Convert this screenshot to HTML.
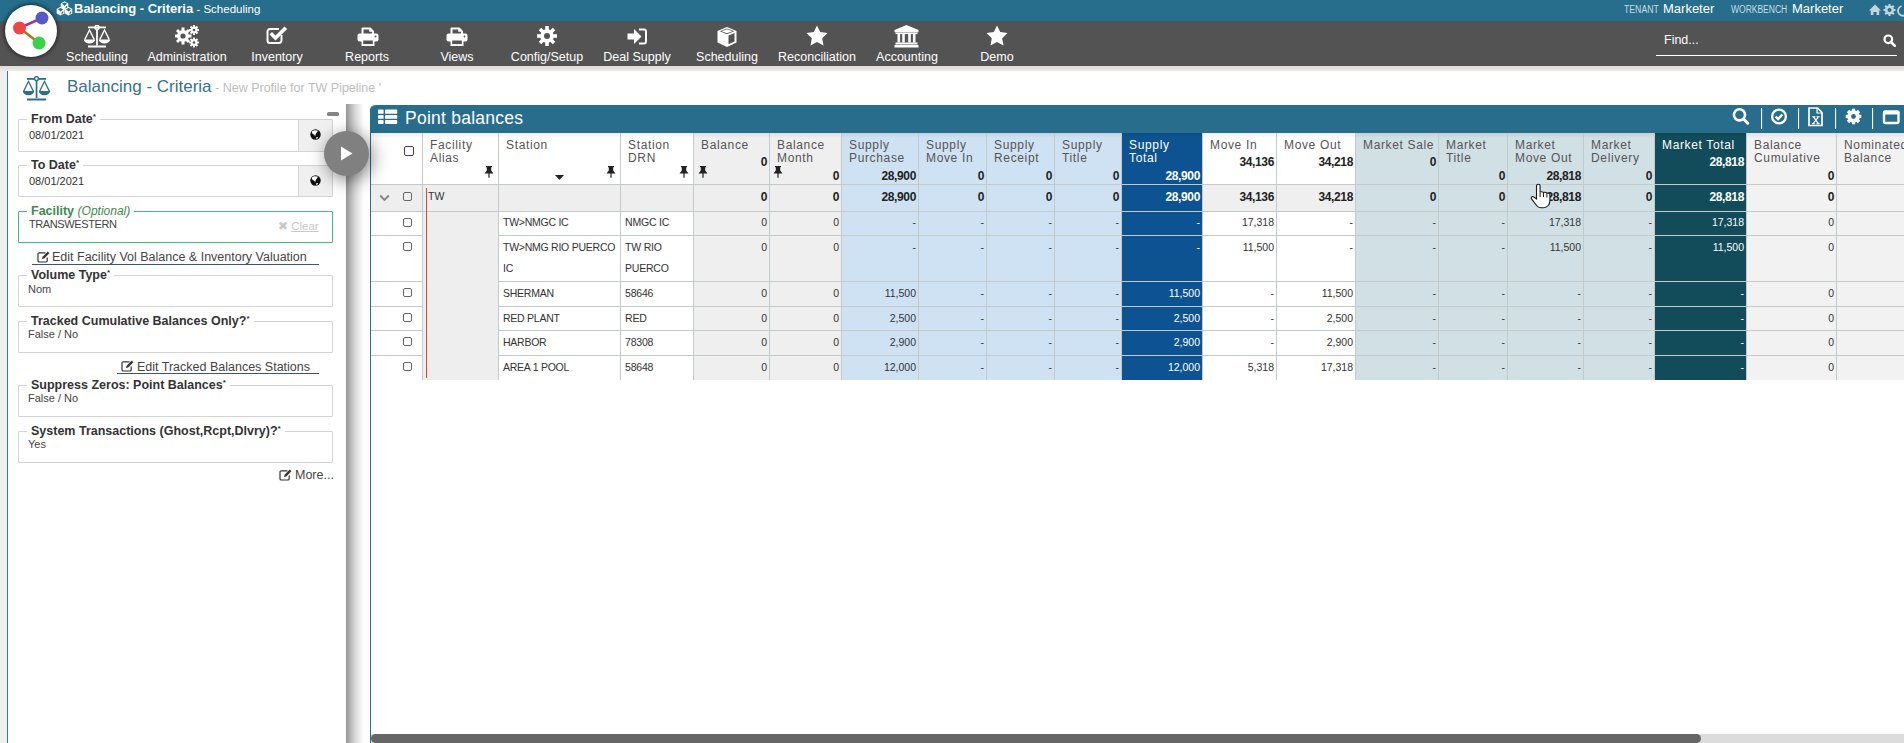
<!DOCTYPE html>
<html><head><meta charset="utf-8">
<style>
*{box-sizing:border-box;margin:0;padding:0}
html,body{width:1904px;height:743px;overflow:hidden;background:#fff;font-family:"Liberation Sans",sans-serif}
.abs{position:absolute}
#topbar{left:0;top:0;width:1904px;height:21px;background:#266e8c}
#nav{left:0;top:21px;width:1904px;height:45px;background:#535353}
#strip{left:0;top:66px;width:1904px;height:5px;background:linear-gradient(#dcdbd9,#ecebe9)}
#lstrip{left:0;top:71px;width:7px;height:672px;background:#f0efed}
#lline{left:7px;top:71px;width:1px;height:672px;background:#2b7bb0}
.navi{position:absolute;top:21px;width:90px;height:45px;text-align:center;color:#fff}
.navi .lb{position:absolute;left:0;width:90px;top:28px;font-size:12.5px;line-height:14px;white-space:nowrap}
.navi svg{position:absolute;left:35px;top:5px}
.t{position:absolute;white-space:nowrap}
</style></head><body>
<div id="topbar" class="abs"></div>
<div id="nav" class="abs"></div>
<div id="strip" class="abs"></div>
<div id="lstrip" class="abs"></div>
<div id="lline" class="abs"></div>

<!-- top bar text -->
<svg class="abs" style="left:56px;top:1px" width="17" height="15" viewBox="0 0 17 15"><path d="M8.50 0.20L12.31 2.40V6.80L8.50 9.00L4.69 6.80V2.40z" fill="#fff"/><path d="M8.50 1.50L11.01 2.60L8.50 4.90L5.99 2.60z" fill="#266e8c"/><path d="M9.50 5.80L11.21 4.40V6.50L9.50 7.90z" fill="#266e8c"/><path d="M4.50 5.80L8.31 8.00V12.40L4.50 14.60L0.69 12.40V8.00z" fill="#fff"/><path d="M4.50 7.10L7.01 8.20L4.50 10.50L1.99 8.20z" fill="#266e8c"/><path d="M5.50 11.40L7.21 10.00V12.10L5.50 13.50z" fill="#266e8c"/><path d="M12.50 5.80L16.31 8.00V12.40L12.50 14.60L8.69 12.40V8.00z" fill="#fff"/><path d="M12.50 7.10L15.01 8.20L12.50 10.50L9.99 8.20z" fill="#266e8c"/><path d="M13.50 11.40L15.21 10.00V12.10L13.50 13.50z" fill="#266e8c"/></svg>
<div class="t" style="left:74px;top:1px;font-size:13px;line-height:16px;color:#fff"><b>Balancing - Criteria</b><span style="font-size:11.5px"> - Scheduling</span></div>
<div class="t" style="left:1624px;top:1px;font-size:13px;line-height:16px;color:#fff"><span style="display:inline-block;font-size:10px;transform:scaleX(.87);transform-origin:0 0;color:#c9dbe3">TENANT</span></div>
<div class="t" style="left:1663px;top:1px;font-size:13px;line-height:16px;color:#fff">Marketer</div>
<div class="t" style="left:1731px;top:1px;font-size:13px;line-height:16px;color:#fff"><span style="display:inline-block;font-size:10px;transform:scaleX(.85);transform-origin:0 0;color:#c9dbe3">WORKBENCH</span></div>
<div class="t" style="left:1792px;top:1px;font-size:13px;line-height:16px;color:#fff">Marketer</div>
<svg class="abs" style="left:1868px;top:2px" width="36" height="16" viewBox="0 0 36 16">
 <path d="M1 8.5L7 2.5l6 6h-1.8V13H8.6V10H5.4v3H2.8V8.5z" fill="#c3d3db"/>
 <g transform="translate(21.5,8)"><circle r="4.6" fill="#c3d3db"/><g stroke="#c3d3db" stroke-width="2"><line y1="-6" y2="6"/><line x1="-6" x2="6"/><line x1="-4.3" y1="-4.3" x2="4.3" y2="4.3"/><line x1="4.3" y1="-4.3" x2="-4.3" y2="4.3"/></g><circle r="2" fill="#266e8c"/></g>
 <path d="M33.5 4a5 5 0 1 0 3 0" fill="none" stroke="#c3d3db" stroke-width="1.8"/>
</svg>
<!-- logo -->
<div class="abs" style="left:5px;top:5px;width:52px;height:52px;border-radius:50%;background:#fff;box-shadow:0 0 4px 1px rgba(0,0,0,.6)"></div>
<svg class="abs" style="left:5px;top:5px" width="52" height="52" viewBox="0 0 52 52">
 <line x1="14.5" y1="23" x2="37" y2="13" stroke="#9a3a9a" stroke-width="2.5"/>
 <line x1="14.5" y1="23" x2="34" y2="38" stroke="#b0702a" stroke-width="2.5"/>
 <circle cx="37" cy="13" r="6.5" fill="#5657c8"/>
 <circle cx="14.5" cy="23" r="6.5" fill="#ef4646"/>
 <circle cx="34" cy="38" r="6.5" fill="#3ad24a"/>
</svg>
<svg class="abs" style="left:83px;top:25px" width="28" height="23" viewBox="0 0 28 23"><g fill="#fff">
<rect x="5" y="1.5" width="18" height="1.8"/><circle cx="14" cy="2.4" r="2" fill="none" stroke="#fff" stroke-width="1.5"/>
<rect x="13.1" y="3.5" width="1.8" height="17"/><rect x="5" y="20.5" width="18" height="2"/>
<path d="M6.5 3.5L1 14.5h1.6L6.5 6.5l3.9 8h1.6z"/><path d="M0.8 14.5h11.4a5.7 4 0 0 1-11.4 0z"/>
<path d="M21.5 3.5L16 14.5h1.6l3.9-8 3.9 8H27z"/><path d="M15.8 14.5h11.4a5.7 4 0 0 1-11.4 0z"/></g></svg><svg class="abs" style="left:175px;top:25px" width="25" height="23" viewBox="0 0 25 23">
<g fill="#fff"><circle cx="8" cy="11" r="6"/>
<g stroke="#fff" stroke-width="3"><line x1="8" y1="2.5" x2="8" y2="19.5"/><line x1="-0.5" y1="11" x2="16.5" y2="11"/><line x1="2" y1="5" x2="14" y2="17"/><line x1="14" y1="5" x2="2" y2="17"/></g>
<circle cx="19" cy="5" r="3.5"/><g stroke="#fff" stroke-width="1.8"><line x1="19" y1="0" x2="19" y2="10"/><line x1="14" y1="5" x2="24" y2="5"/><line x1="15.5" y1="1.5" x2="22.5" y2="8.5"/><line x1="22.5" y1="1.5" x2="15.5" y2="8.5"/></g>
<circle cx="19" cy="17.5" r="3.5"/><g stroke="#fff" stroke-width="1.8"><line x1="19" y1="12.5" x2="19" y2="22.5"/><line x1="14" y1="17.5" x2="24" y2="17.5"/><line x1="15.5" y1="14" x2="22.5" y2="21"/><line x1="22.5" y1="14" x2="15.5" y2="21"/></g></g>
<circle cx="8" cy="11" r="2.6" fill="#535353"/><circle cx="19" cy="5" r="1.3" fill="#535353"/><circle cx="19" cy="17.5" r="1.3" fill="#535353"/></svg><svg class="abs" style="left:266px;top:26px" width="23" height="19" viewBox="0 0 23 19">
<path d="M15.5 9v5.5a2.5 2.5 0 0 1-2.5 2.5H4a2.5 2.5 0 0 1-2.5-2.5V5.5A2.5 2.5 0 0 1 4 3h9" fill="none" stroke="#fff" stroke-width="2"/>
<path d="M3.5 8.5l2.5-2.5 3.5 3.5L18.5 0.5l2.7 2.5L9.5 14.5z" fill="#fff"/></svg><svg class="abs" style="left:357px;top:27px" width="22" height="19" viewBox="0 0 22 19"><g fill="#fff">
<path d="M4.5 7V1.5a1 1 0 0 1 1-1h8l3.5 3.5V7h-2V4.8h-2.8V2.5H6.5V7z"/><rect x="0.5" y="6.5" width="21" height="8" rx="2"/><path d="M4.5 11.5h13V19h-13z"/></g>
<rect x="6.5" y="2" width="7" height="4" fill="#535353" opacity="0"/><rect x="6.2" y="13.5" width="9.6" height="3.6" fill="#535353"/><circle cx="18.5" cy="9.5" r="0.9" fill="#535353"/></svg><svg class="abs" style="left:446px;top:27px" width="22" height="19" viewBox="0 0 22 19"><g fill="#fff">
<path d="M4.5 7V1.5a1 1 0 0 1 1-1h8l3.5 3.5V7h-2V4.8h-2.8V2.5H6.5V7z"/><rect x="0.5" y="6.5" width="21" height="8" rx="2"/><path d="M4.5 11.5h13V19h-13z"/></g>
<rect x="6.5" y="2" width="7" height="4" fill="#535353" opacity="0"/><rect x="6.2" y="13.5" width="9.6" height="3.6" fill="#535353"/><circle cx="18.5" cy="9.5" r="0.9" fill="#535353"/></svg><svg class="abs" style="left:537px;top:26px" width="20" height="20" viewBox="0 0 20 20"><g fill="#fff"><circle cx="10" cy="10" r="6.8"/>
<g stroke="#fff" stroke-width="3.6"><line x1="10" y1="0" x2="10" y2="20"/><line x1="0" y1="10" x2="20" y2="10"/><line x1="3" y1="3" x2="17" y2="17"/><line x1="17" y1="3" x2="3" y2="17"/></g></g>
<circle cx="10" cy="10" r="3" fill="#535353"/></svg><svg class="abs" style="left:627px;top:28px" width="21" height="17" viewBox="0 0 21 17"><g fill="#fff">
<path d="M0.5 5.5h6.5V1l7.5 7.5L7 16v-4.5H0.5z"/><path d="M12 0.5h5a3 3 0 0 1 3 3v10a3 3 0 0 1-3 3h-5v-2h5a1 1 0 0 0 1-1v-10a1 1 0 0 0-1-1h-5z"/></g></svg><svg class="abs" style="left:716px;top:26px" width="22" height="22" viewBox="0 0 22 22">
<path d="M11 1L20.5 5v11.5L11 21 1.5 16.5V5z" fill="#fff"/><path d="M4 6.5l7 3v9l-7-3.2z" fill="#fff"/><path d="M12.5 9.5l6-2.6v8.6l-6 2.8z" fill="#535353"/><path d="M3.8 5.3L11 2.5l7.2 2.8L11 8.2z" fill="#535353"/><path d="M5.5 5.3L11 3.3l5.5 2L11 7.3z" fill="#fff"/></svg><svg class="abs" style="left:806px;top:25px" width="22" height="21" viewBox="0 0 22 21"><path d="M11 0.5l3.2 6.6 7.3 1-5.3 5.1 1.3 7.3L11 17l-6.5 3.5 1.3-7.3L0.5 8.1l7.3-1z" fill="#fff"/></svg><svg class="abs" style="left:894px;top:25px" width="25" height="23" viewBox="0 0 25 23"><g fill="#fff">
<path d="M12.5 0L24.5 5v2.2H0.5V5z"/><rect x="1.5" y="7.5" width="22" height="1.6"/>
<rect x="3.5" y="9" width="2.6" height="8.5"/><rect x="8.2" y="9" width="2.6" height="8.5"/><rect x="14.2" y="9" width="2.6" height="8.5"/><rect x="18.9" y="9" width="2.6" height="8.5"/>
<rect x="1.5" y="17.5" width="22" height="2"/><rect x="0.5" y="20" width="24" height="2.5"/></g></svg><svg class="abs" style="left:986px;top:25px" width="22" height="21" viewBox="0 0 22 21"><path d="M11 0.5l3.2 6.6 7.3 1-5.3 5.1 1.3 7.3L11 17l-6.5 3.5 1.3-7.3L0.5 8.1l7.3-1z" fill="#fff"/></svg><div class="t" style="left:37px;top:50px;width:120px;text-align:center;font-size:12.5px;line-height:14px;color:#fff">Scheduling</div><div class="t" style="left:127px;top:50px;width:120px;text-align:center;font-size:12.5px;line-height:14px;color:#fff">Administration</div><div class="t" style="left:217px;top:50px;width:120px;text-align:center;font-size:12.5px;line-height:14px;color:#fff">Inventory</div><div class="t" style="left:307px;top:50px;width:120px;text-align:center;font-size:12.5px;line-height:14px;color:#fff">Reports</div><div class="t" style="left:397px;top:50px;width:120px;text-align:center;font-size:12.5px;line-height:14px;color:#fff">Views</div><div class="t" style="left:487px;top:50px;width:120px;text-align:center;font-size:12.5px;line-height:14px;color:#fff">Config/Setup</div><div class="t" style="left:577px;top:50px;width:120px;text-align:center;font-size:12.5px;line-height:14px;color:#fff">Deal Supply</div><div class="t" style="left:667px;top:50px;width:120px;text-align:center;font-size:12.5px;line-height:14px;color:#fff">Scheduling</div><div class="t" style="left:757px;top:50px;width:120px;text-align:center;font-size:12.5px;line-height:14px;color:#fff">Reconciliation</div><div class="t" style="left:847px;top:50px;width:120px;text-align:center;font-size:12.5px;line-height:14px;color:#fff">Accounting</div><div class="t" style="left:937px;top:50px;width:120px;text-align:center;font-size:12.5px;line-height:14px;color:#fff">Demo</div><div class="t" style="left:1664px;top:33px;font-size:12.5px;line-height:14px;color:#fff">Find...</div>
<div class="abs" style="left:1656px;top:55px;width:241px;height:1px;background:#fff"></div>
<svg class="abs" style="left:1883px;top:34px" width="13" height="13" viewBox="0 0 13 13"><circle cx="5.3" cy="5.3" r="3.8" fill="none" stroke="#fff" stroke-width="2.2"/><path d="M8 8l3.8 3.8" stroke="#fff" stroke-width="2.6" stroke-linecap="round"/></svg>

<!-- page title -->
<svg class="abs" style="left:22px;top:76px" width="29" height="25" viewBox="0 0 29 25"><g fill="#2a6f8e">
<rect x="5" y="2" width="19" height="1.8"/><circle cx="14.5" cy="2.6" r="2" fill="#fff" stroke="#2a6f8e" stroke-width="1.4"/>
<rect x="13.7" y="4" width="1.7" height="18"/><rect x="5" y="22.5" width="19" height="2"/>
<path d="M6.5 4L1 15h1.5L6.5 6.8l4 8.2H12z"/><path d="M0.8 15h11.4a5.7 4.2 0 0 1-11.4 0z"/>
<path d="M22.5 4L17 15h1.5l4-8.2 4 8.2H28z"/><path d="M16.8 15h11.4a5.7 4.2 0 0 1-11.4 0z"/></g></svg>
<div class="t" style="left:67px;top:77px;font-size:17px;line-height:20px;color:#36718f">Balancing - Criteria<span style="font-size:12.5px;color:#bdbdbd"> - New Profile for TW Pipeline '</span></div>

<!-- left panel -->
<div class="abs" style="left:346px;top:104px;width:18px;height:639px;background:linear-gradient(90deg,#939393 0,#b3b3b3 4px,#d6d6d6 9px,#efefef 14px,#fff 18px)"></div>
<div class="abs" style="left:327px;top:112px;width:12px;height:4px;border-radius:1.5px;background:#858585"></div>
<div class="abs" style="left:18px;top:119px;width:315px;height:33px;border:1px solid #d4d4d4;border-radius:1px"></div><div class="abs" style="left:298px;top:120px;width:34px;height:31px;background:#f0f0f0;border-left:1px solid #d4d4d4"></div><div class="t" style="left:27px;top:110px;padding:0 4px;background:#fff;font-size:12.5px;line-height:13px;font-weight:bold;color:#333">From Date<sup style="font-size:8px;vertical-align:4px">*</sup></div><div class="t" style="left:29px;top:129px;font-size:11px;line-height:12px;color:#333">08/01/2021</div><div class="abs" style="left:18px;top:165px;width:315px;height:32px;border:1px solid #d4d4d4;border-radius:1px"></div><div class="abs" style="left:298px;top:166px;width:34px;height:30px;background:#f0f0f0;border-left:1px solid #d4d4d4"></div><div class="t" style="left:27px;top:156px;padding:0 4px;background:#fff;font-size:12.5px;line-height:13px;font-weight:bold;color:#333">To Date<sup style="font-size:8px;vertical-align:4px">*</sup></div><div class="t" style="left:29px;top:175px;font-size:11px;line-height:12px;color:#333">08/01/2021</div><svg class="abs" style="left:310px;top:129px" width="11" height="11" viewBox="0 0 11 11"><circle cx="5.5" cy="5.5" r="5.2" fill="#111"/><path d="M1.8 2.6L4 1.3l3.7.2-.3 1.6-1.5 1.4-.6 2.4-1.5-1.3L2 4.2z" fill="#fff"/><path d="M5.8 8.5l2.2-.5-.4 1.5-1.5.3z" fill="#fff"/></svg><svg class="abs" style="left:310px;top:175px" width="11" height="11" viewBox="0 0 11 11"><circle cx="5.5" cy="5.5" r="5.2" fill="#111"/><path d="M1.8 2.6L4 1.3l3.7.2-.3 1.6-1.5 1.4-.6 2.4-1.5-1.3L2 4.2z" fill="#fff"/><path d="M5.8 8.5l2.2-.5-.4 1.5-1.5.3z" fill="#fff"/></svg><div class="abs" style="left:18px;top:211px;width:315px;height:32px;border:1px solid #3fbf7f;border-radius:1px"></div><div class="t" style="left:27px;top:205px;padding:0 4px;background:#fff;font-size:12.5px;line-height:13px;color:#3f8a4f"><b>Facility</b> <i style="font-size:12px">(Optional)</i></div><div class="t" style="left:29px;top:218px;font-size:11px;line-height:12px;letter-spacing:-.4px;color:#444">TRANSWESTERN</div><div class="t" style="left:278px;top:220px;font-size:11.5px;line-height:13px;color:#c8c8c8">&#10006; <span style="text-decoration:underline">Clear</span></div><svg class="abs" style="left:37px;top:251px" width="13" height="12" viewBox="0 0 13 12"><path d="M8.5 1.8H2.3a1.3 1.3 0 0 0-1.3 1.3v6.6A1.3 1.3 0 0 0 2.3 11h6.6a1.3 1.3 0 0 0 1.3-1.3V6.5" fill="none" stroke="#333" stroke-width="1.2"/><path d="M5 8l.6-2.2L10.8.6l1.6 1.6L7.2 7.4z" fill="#333"/></svg><div class="t" style="left:52px;top:250px;font-size:12.5px;line-height:14px;color:#444">Edit Facility Vol Balance &amp; Inventory Valuation</div><div class="abs" style="left:32px;top:264px;width:287px;height:1px;background:#3b5578"></div><div class="abs" style="left:18px;top:275px;width:315px;height:32px;border:1px solid #d4d4d4;border-radius:1px"></div><div class="t" style="left:27px;top:266px;padding:0 4px;background:#fff;font-size:12.5px;line-height:13px;font-weight:bold;color:#333">Volume Type<sup style="font-size:8px;vertical-align:4px">*</sup></div><div class="t" style="left:28px;top:283px;font-size:11px;line-height:12px;color:#444">Nom</div><div class="abs" style="left:18px;top:321px;width:315px;height:32px;border:1px solid #d4d4d4;border-radius:1px"></div><div class="t" style="left:27px;top:312px;padding:0 4px;background:#fff;font-size:12.5px;line-height:13px;font-weight:bold;color:#333">Tracked Cumulative Balances Only?<sup style="font-size:8px;vertical-align:4px">*</sup></div><div class="t" style="left:28px;top:328px;font-size:11px;line-height:12px;color:#444">False / No</div><svg class="abs" style="left:121px;top:360px" width="13" height="12" viewBox="0 0 13 12"><path d="M8.5 1.8H2.3a1.3 1.3 0 0 0-1.3 1.3v6.6A1.3 1.3 0 0 0 2.3 11h6.6a1.3 1.3 0 0 0 1.3-1.3V6.5" fill="none" stroke="#333" stroke-width="1.2"/><path d="M5 8l.6-2.2L10.8.6l1.6 1.6L7.2 7.4z" fill="#333"/></svg><div class="t" style="left:137px;top:360px;font-size:12.5px;line-height:14px;color:#444">Edit Tracked Balances Stations</div><div class="abs" style="left:117px;top:373px;width:202px;height:1px;background:#3b5578"></div><div class="abs" style="left:18px;top:385px;width:315px;height:32px;border:1px solid #d4d4d4;border-radius:1px"></div><div class="t" style="left:27px;top:376px;padding:0 4px;background:#fff;font-size:12.5px;line-height:13px;font-weight:bold;color:#333">Suppress Zeros: Point Balances<sup style="font-size:8px;vertical-align:4px">*</sup></div><div class="t" style="left:28px;top:392px;font-size:11px;line-height:12px;color:#444">False / No</div><div class="abs" style="left:18px;top:431px;width:315px;height:32px;border:1px solid #d4d4d4;border-radius:1px"></div><div class="t" style="left:27px;top:422px;padding:0 4px;background:#fff;font-size:12.5px;line-height:13px;font-weight:bold;color:#333">System Transactions (Ghost,Rcpt,Dlvry)?<sup style="font-size:8px;vertical-align:4px">*</sup></div><div class="t" style="left:28px;top:438px;font-size:11px;line-height:12px;color:#444">Yes</div><svg class="abs" style="left:279px;top:469px" width="13" height="12" viewBox="0 0 13 12"><path d="M8.5 1.8H2.3a1.3 1.3 0 0 0-1.3 1.3v6.6A1.3 1.3 0 0 0 2.3 11h6.6a1.3 1.3 0 0 0 1.3-1.3V6.5" fill="none" stroke="#333" stroke-width="1.2"/><path d="M5 8l.6-2.2L10.8.6l1.6 1.6L7.2 7.4z" fill="#333"/></svg><div class="t" style="left:295px;top:468px;font-size:12.5px;line-height:14px;color:#444">More...</div><div class="abs" style="z-index:10;left:324px;top:131px;width:45px;height:45px;border-radius:50%;background:#808080;box-shadow:3px 4px 18px rgba(0,0,0,.5)"></div>
<svg class="abs" style="z-index:11;left:340px;top:146px" width="13" height="15" viewBox="0 0 13 15"><path d="M1 0.5L12.5 7.5 1 14.5z" fill="#fff"/></svg>













<!-- GRID -->
<div class="abs" style="left:370px;top:105px;width:1600px;height:638px;border-left:1px solid #286e8c;border-top-left-radius:5px;overflow:hidden">
</div>
<div class="abs" style="left:370px;top:105px;width:1540px;height:28px;background:#286e8c;border-top-left-radius:6px"></div>
<div class="abs" style="left:370px;top:111px;width:1px;height:632px;background:#286e8c"></div>
<svg class="abs" style="left:378px;top:109px" width="20" height="16" viewBox="0 0 20 16"><g fill="#fff"><rect x="0" y="0.6" width="5.6" height="4.2" rx=".9"/><rect x="7" y="0.6" width="12.2" height="4.2" rx=".9"/><rect x="0" y="5.9" width="5.6" height="3.9" rx=".9"/><rect x="7" y="5.9" width="12.2" height="3.9" rx=".9"/><rect x="0" y="11" width="5.6" height="3.9" rx=".9"/><rect x="7" y="11" width="12.2" height="3.9" rx=".9"/></g></svg>
<div class="t" style="left:405px;top:108px;font-size:17.5px;line-height:20px;letter-spacing:.25px;color:#fff">Point balances</div>
<svg class="abs" style="left:1725px;top:104px" width="179" height="28" viewBox="0 0 179 28">
<circle cx="14.5" cy="10.8" r="5.6" fill="none" stroke="#fff" stroke-width="2.6"/><path d="M18.6 15l4.2 4.2" stroke="#fff" stroke-width="3" stroke-linecap="round"/>
<rect x="36" y="4" width="1.1" height="21" fill="#fff"/>
<circle cx="54" cy="12.5" r="6.9" fill="none" stroke="#fff" stroke-width="2.3"/><path d="M50.6 12.5l2.5 2.5 4.3-4.5" fill="none" stroke="#fff" stroke-width="2.4"/>
<rect x="73" y="4" width="1.1" height="21" fill="#fff"/>
<path d="M84 4h8.5l4.5 4.5V21.5H84z" fill="none" stroke="#fff" stroke-width="1.7"/><path d="M92 4v5h5" fill="none" stroke="#fff" stroke-width="1.2"/>
<path d="M87.2 12.3h3.2v1h-0.7l1.3 1.9 1.3-1.9h-.7v-1h3v1h-.8l-2.2 2.9 2.4 3.1h.7v1h-3.2v-1h.7l-1.5-2.1-1.5 2.1h.7v1H86.9v-1h.8l2.4-3.1-2.2-2.9h-.7z" fill="#fff"/>
<rect x="110" y="4" width="1.1" height="21" fill="#fff"/>
<g transform="translate(128.5,12.5)"><circle r="6.2" fill="#fff"/><g stroke="#fff" stroke-width="3.3"><line x1="0" y1="-7.8" x2="0" y2="7.8"/><line x1="-7.8" y1="0" x2="7.8" y2="0"/><line x1="-5.5" y1="-5.5" x2="5.5" y2="5.5"/><line x1="5.5" y1="-5.5" x2="-5.5" y2="5.5"/></g><circle r="2.4" fill="#286e8c"/></g>
<rect x="147" y="4" width="1.1" height="21" fill="#fff"/>
<rect x="159" y="7.8" width="14.5" height="11.2" rx="1.5" fill="none" stroke="#fff" stroke-width="2.4"/><rect x="158" y="6.6" width="16.5" height="4" rx="1.5" fill="#fff"/>
</svg>
<div class="abs" style="left:371px;top:133px;width:51px;height:51px;background:#ffffff"></div>
<div class="abs" style="left:371px;top:184px;width:51px;height:27px;background:#eeeeee"></div>
<div class="abs" style="left:371px;top:211px;width:51px;height:169px;background:#ffffff"></div>
<div class="abs" style="left:422px;top:133px;width:76px;height:51px;background:#ffffff"></div>
<div class="abs" style="left:422px;top:184px;width:76px;height:27px;background:#eeeeee"></div>
<div class="abs" style="left:422px;top:211px;width:76px;height:169px;background:#eeeeee"></div>
<div class="abs" style="left:498px;top:133px;width:122px;height:51px;background:#ffffff"></div>
<div class="abs" style="left:498px;top:184px;width:122px;height:27px;background:#eeeeee"></div>
<div class="abs" style="left:498px;top:211px;width:122px;height:169px;background:#ffffff"></div>
<div class="abs" style="left:620px;top:133px;width:73px;height:51px;background:#ffffff"></div>
<div class="abs" style="left:620px;top:184px;width:73px;height:27px;background:#eeeeee"></div>
<div class="abs" style="left:620px;top:211px;width:73px;height:169px;background:#ffffff"></div>
<div class="abs" style="left:693px;top:133px;width:76px;height:51px;background:#efefef"></div>
<div class="abs" style="left:693px;top:184px;width:76px;height:27px;background:#eeeeee"></div>
<div class="abs" style="left:693px;top:211px;width:76px;height:169px;background:#efefef"></div>
<div class="abs" style="left:769px;top:133px;width:72px;height:51px;background:#efefef"></div>
<div class="abs" style="left:769px;top:184px;width:72px;height:27px;background:#eeeeee"></div>
<div class="abs" style="left:769px;top:211px;width:72px;height:169px;background:#efefef"></div>
<div class="abs" style="left:841px;top:133px;width:77px;height:51px;background:#cfe2f3"></div>
<div class="abs" style="left:841px;top:184px;width:77px;height:27px;background:#cfe2f3"></div>
<div class="abs" style="left:841px;top:211px;width:77px;height:169px;background:#cfe2f3"></div>
<div class="abs" style="left:918px;top:133px;width:68px;height:51px;background:#cfe2f3"></div>
<div class="abs" style="left:918px;top:184px;width:68px;height:27px;background:#cfe2f3"></div>
<div class="abs" style="left:918px;top:211px;width:68px;height:169px;background:#cfe2f3"></div>
<div class="abs" style="left:986px;top:133px;width:68px;height:51px;background:#cfe2f3"></div>
<div class="abs" style="left:986px;top:184px;width:68px;height:27px;background:#cfe2f3"></div>
<div class="abs" style="left:986px;top:211px;width:68px;height:169px;background:#cfe2f3"></div>
<div class="abs" style="left:1054px;top:133px;width:67px;height:51px;background:#cfe2f3"></div>
<div class="abs" style="left:1054px;top:184px;width:67px;height:27px;background:#cfe2f3"></div>
<div class="abs" style="left:1054px;top:211px;width:67px;height:169px;background:#cfe2f3"></div>
<div class="abs" style="left:1121px;top:133px;width:81px;height:51px;background:#0d5392"></div>
<div class="abs" style="left:1121px;top:184px;width:81px;height:27px;background:#0d5392"></div>
<div class="abs" style="left:1121px;top:211px;width:81px;height:169px;background:#0d5392"></div>
<div class="abs" style="left:1202px;top:133px;width:74px;height:51px;background:#ffffff"></div>
<div class="abs" style="left:1202px;top:184px;width:74px;height:27px;background:#efefef"></div>
<div class="abs" style="left:1202px;top:211px;width:74px;height:169px;background:#ffffff"></div>
<div class="abs" style="left:1276px;top:133px;width:79px;height:51px;background:#ffffff"></div>
<div class="abs" style="left:1276px;top:184px;width:79px;height:27px;background:#efefef"></div>
<div class="abs" style="left:1276px;top:211px;width:79px;height:169px;background:#ffffff"></div>
<div class="abs" style="left:1355px;top:133px;width:83px;height:51px;background:#d1e0e5"></div>
<div class="abs" style="left:1355px;top:184px;width:83px;height:27px;background:#d1e0e5"></div>
<div class="abs" style="left:1355px;top:211px;width:83px;height:169px;background:#d1e0e5"></div>
<div class="abs" style="left:1438px;top:133px;width:69px;height:51px;background:#d1e0e5"></div>
<div class="abs" style="left:1438px;top:184px;width:69px;height:27px;background:#d1e0e5"></div>
<div class="abs" style="left:1438px;top:211px;width:69px;height:169px;background:#d1e0e5"></div>
<div class="abs" style="left:1507px;top:133px;width:76px;height:51px;background:#d1e0e5"></div>
<div class="abs" style="left:1507px;top:184px;width:76px;height:27px;background:#d1e0e5"></div>
<div class="abs" style="left:1507px;top:211px;width:76px;height:169px;background:#d1e0e5"></div>
<div class="abs" style="left:1583px;top:133px;width:71px;height:51px;background:#d1e0e5"></div>
<div class="abs" style="left:1583px;top:184px;width:71px;height:27px;background:#d1e0e5"></div>
<div class="abs" style="left:1583px;top:211px;width:71px;height:169px;background:#d1e0e5"></div>
<div class="abs" style="left:1654px;top:133px;width:92px;height:51px;background:#124c5b"></div>
<div class="abs" style="left:1654px;top:184px;width:92px;height:27px;background:#124c5b"></div>
<div class="abs" style="left:1654px;top:211px;width:92px;height:169px;background:#124c5b"></div>
<div class="abs" style="left:1746px;top:133px;width:90px;height:51px;background:#f2f2f2"></div>
<div class="abs" style="left:1746px;top:184px;width:90px;height:27px;background:#f2f2f2"></div>
<div class="abs" style="left:1746px;top:211px;width:90px;height:169px;background:#f2f2f2"></div>
<div class="abs" style="left:1836px;top:133px;width:124px;height:51px;background:#f2f2f2"></div>
<div class="abs" style="left:1836px;top:184px;width:124px;height:27px;background:#f2f2f2"></div>
<div class="abs" style="left:1836px;top:211px;width:124px;height:169px;background:#f2f2f2"></div>
<div class="abs" style="left:371px;top:133px;width:1533px;height:5px;background:linear-gradient(rgba(0,0,0,.07),rgba(0,0,0,0))"></div>
<div class="abs" style="left:371px;top:184px;width:1589px;height:1px;background:#c3caca"></div>
<div class="abs" style="left:371px;top:211px;width:1589px;height:1px;background:#c3caca"></div>
<div class="abs" style="left:371px;top:235px;width:51px;height:1px;background:#c3caca"></div>
<div class="abs" style="left:498px;top:235px;width:1462px;height:1px;background:#c3caca"></div>
<div class="abs" style="left:371px;top:281px;width:51px;height:1px;background:#c3caca"></div>
<div class="abs" style="left:498px;top:281px;width:1462px;height:1px;background:#c3caca"></div>
<div class="abs" style="left:371px;top:306px;width:51px;height:1px;background:#c3caca"></div>
<div class="abs" style="left:498px;top:306px;width:1462px;height:1px;background:#c3caca"></div>
<div class="abs" style="left:371px;top:330px;width:51px;height:1px;background:#c3caca"></div>
<div class="abs" style="left:498px;top:330px;width:1462px;height:1px;background:#c3caca"></div>
<div class="abs" style="left:371px;top:355px;width:51px;height:1px;background:#c3caca"></div>
<div class="abs" style="left:498px;top:355px;width:1462px;height:1px;background:#c3caca"></div>
<div class="abs" style="left:422px;top:133px;width:1px;height:247px;background:#c3caca"></div>
<div class="abs" style="left:498px;top:133px;width:1px;height:247px;background:#c3caca"></div>
<div class="abs" style="left:620px;top:133px;width:1px;height:247px;background:#c3caca"></div>
<div class="abs" style="left:693px;top:133px;width:1px;height:247px;background:#c3caca"></div>
<div class="abs" style="left:769px;top:133px;width:1px;height:247px;background:#c3caca"></div>
<div class="abs" style="left:841px;top:133px;width:1px;height:247px;background:#c3caca"></div>
<div class="abs" style="left:918px;top:133px;width:1px;height:247px;background:#c3caca"></div>
<div class="abs" style="left:986px;top:133px;width:1px;height:247px;background:#c3caca"></div>
<div class="abs" style="left:1054px;top:133px;width:1px;height:247px;background:#c3caca"></div>
<div class="abs" style="left:1121px;top:133px;width:1px;height:247px;background:#c3caca"></div>
<div class="abs" style="left:1202px;top:133px;width:1px;height:247px;background:#c3caca"></div>
<div class="abs" style="left:1276px;top:133px;width:1px;height:247px;background:#c3caca"></div>
<div class="abs" style="left:1355px;top:133px;width:1px;height:247px;background:#c3caca"></div>
<div class="abs" style="left:1438px;top:133px;width:1px;height:247px;background:#c3caca"></div>
<div class="abs" style="left:1507px;top:133px;width:1px;height:247px;background:#c3caca"></div>
<div class="abs" style="left:1583px;top:133px;width:1px;height:247px;background:#c3caca"></div>
<div class="abs" style="left:1654px;top:133px;width:1px;height:247px;background:#c3caca"></div>
<div class="abs" style="left:1746px;top:133px;width:1px;height:247px;background:#c3caca"></div>
<div class="abs" style="left:1836px;top:133px;width:1px;height:247px;background:#c3caca"></div>
<div class="t" style="left:430px;top:139px;font-size:12px;line-height:13px;letter-spacing:.65px;color:#555">Facility<br>Alias</div>
<div class="t" style="left:506px;top:139px;font-size:12px;line-height:13px;letter-spacing:.65px;color:#555">Station</div>
<div class="t" style="left:628px;top:139px;font-size:12px;line-height:13px;letter-spacing:.65px;color:#555">Station<br>DRN</div>
<div class="t" style="left:701px;top:139px;font-size:12px;line-height:13px;letter-spacing:.65px;color:#555">Balance</div>
<div class="t" style="left:777px;top:139px;font-size:12px;line-height:13px;letter-spacing:.65px;color:#555">Balance<br>Month</div>
<div class="t" style="left:849px;top:139px;font-size:12px;line-height:13px;letter-spacing:.65px;color:#555">Supply<br>Purchase</div>
<div class="t" style="left:926px;top:139px;font-size:12px;line-height:13px;letter-spacing:.65px;color:#555">Supply<br>Move In</div>
<div class="t" style="left:994px;top:139px;font-size:12px;line-height:13px;letter-spacing:.65px;color:#555">Supply<br>Receipt</div>
<div class="t" style="left:1062px;top:139px;font-size:12px;line-height:13px;letter-spacing:.65px;color:#555">Supply<br>Title</div>
<div class="t" style="left:1129px;top:139px;font-size:12px;line-height:13px;letter-spacing:.65px;color:#fff">Supply<br>Total</div>
<div class="t" style="left:1210px;top:139px;font-size:12px;line-height:13px;letter-spacing:.65px;color:#555">Move In</div>
<div class="t" style="left:1284px;top:139px;font-size:12px;line-height:13px;letter-spacing:.65px;color:#555">Move Out</div>
<div class="t" style="left:1363px;top:139px;font-size:12px;line-height:13px;letter-spacing:.65px;color:#555">Market Sale</div>
<div class="t" style="left:1446px;top:139px;font-size:12px;line-height:13px;letter-spacing:.65px;color:#555">Market<br>Title</div>
<div class="t" style="left:1515px;top:139px;font-size:12px;line-height:13px;letter-spacing:.65px;color:#555">Market<br>Move Out</div>
<div class="t" style="left:1591px;top:139px;font-size:12px;line-height:13px;letter-spacing:.65px;color:#555">Market<br>Delivery</div>
<div class="t" style="left:1662px;top:139px;font-size:12px;line-height:13px;letter-spacing:.65px;color:#fff">Market Total</div>
<div class="t" style="left:1754px;top:139px;font-size:12px;line-height:13px;letter-spacing:.65px;color:#555">Balance<br>Cumulative</div>
<div class="t" style="left:1844px;top:139px;font-size:12px;line-height:13px;letter-spacing:.65px;color:#555">Nominated<br>Balance</div>
<div class="t" style="left:693px;top:156px;width:74px;text-align:right;font-size:12px;line-height:13px;letter-spacing:-.35px;font-weight:bold;color:#222">0</div>

<div class="t" style="left:769px;top:170px;width:70px;text-align:right;font-size:12px;line-height:13px;letter-spacing:-.35px;font-weight:bold;color:#222">0</div>

<div class="t" style="left:841px;top:170px;width:75px;text-align:right;font-size:12px;line-height:13px;letter-spacing:-.35px;font-weight:bold;color:#222">28,900</div>

<div class="t" style="left:918px;top:170px;width:66px;text-align:right;font-size:12px;line-height:13px;letter-spacing:-.35px;font-weight:bold;color:#222">0</div>

<div class="t" style="left:986px;top:170px;width:66px;text-align:right;font-size:12px;line-height:13px;letter-spacing:-.35px;font-weight:bold;color:#222">0</div>

<div class="t" style="left:1054px;top:170px;width:65px;text-align:right;font-size:12px;line-height:13px;letter-spacing:-.35px;font-weight:bold;color:#222">0</div>

<div class="t" style="left:1121px;top:170px;width:79px;text-align:right;font-size:12px;line-height:13px;letter-spacing:-.35px;font-weight:bold;color:#fff">28,900</div>

<div class="t" style="left:1202px;top:156px;width:72px;text-align:right;font-size:12px;line-height:13px;letter-spacing:-.35px;font-weight:bold;color:#222">34,136</div>

<div class="t" style="left:1276px;top:156px;width:77px;text-align:right;font-size:12px;line-height:13px;letter-spacing:-.35px;font-weight:bold;color:#222">34,218</div>

<div class="t" style="left:1355px;top:156px;width:81px;text-align:right;font-size:12px;line-height:13px;letter-spacing:-.35px;font-weight:bold;color:#222">0</div>

<div class="t" style="left:1438px;top:170px;width:67px;text-align:right;font-size:12px;line-height:13px;letter-spacing:-.35px;font-weight:bold;color:#222">0</div>

<div class="t" style="left:1507px;top:170px;width:74px;text-align:right;font-size:12px;line-height:13px;letter-spacing:-.35px;font-weight:bold;color:#222">28,818</div>

<div class="t" style="left:1583px;top:170px;width:69px;text-align:right;font-size:12px;line-height:13px;letter-spacing:-.35px;font-weight:bold;color:#222">0</div>

<div class="t" style="left:1654px;top:156px;width:90px;text-align:right;font-size:12px;line-height:13px;letter-spacing:-.35px;font-weight:bold;color:#fff">28,818</div>

<div class="t" style="left:1746px;top:170px;width:88px;text-align:right;font-size:12px;line-height:13px;letter-spacing:-.35px;font-weight:bold;color:#222">0</div>

<div class="t" style="left:693px;top:191px;width:74px;text-align:right;font-size:12px;line-height:13px;letter-spacing:-.35px;font-weight:bold;color:#222">0</div>
<div class="t" style="left:769px;top:191px;width:70px;text-align:right;font-size:12px;line-height:13px;letter-spacing:-.35px;font-weight:bold;color:#222">0</div>
<div class="t" style="left:841px;top:191px;width:75px;text-align:right;font-size:12px;line-height:13px;letter-spacing:-.35px;font-weight:bold;color:#222">28,900</div>
<div class="t" style="left:918px;top:191px;width:66px;text-align:right;font-size:12px;line-height:13px;letter-spacing:-.35px;font-weight:bold;color:#222">0</div>
<div class="t" style="left:986px;top:191px;width:66px;text-align:right;font-size:12px;line-height:13px;letter-spacing:-.35px;font-weight:bold;color:#222">0</div>
<div class="t" style="left:1054px;top:191px;width:65px;text-align:right;font-size:12px;line-height:13px;letter-spacing:-.35px;font-weight:bold;color:#222">0</div>
<div class="t" style="left:1121px;top:191px;width:79px;text-align:right;font-size:12px;line-height:13px;letter-spacing:-.35px;font-weight:bold;color:#fff">28,900</div>
<div class="t" style="left:1202px;top:191px;width:72px;text-align:right;font-size:12px;line-height:13px;letter-spacing:-.35px;font-weight:bold;color:#222">34,136</div>
<div class="t" style="left:1276px;top:191px;width:77px;text-align:right;font-size:12px;line-height:13px;letter-spacing:-.35px;font-weight:bold;color:#222">34,218</div>
<div class="t" style="left:1355px;top:191px;width:81px;text-align:right;font-size:12px;line-height:13px;letter-spacing:-.35px;font-weight:bold;color:#222">0</div>
<div class="t" style="left:1438px;top:191px;width:67px;text-align:right;font-size:12px;line-height:13px;letter-spacing:-.35px;font-weight:bold;color:#222">0</div>
<div class="t" style="left:1507px;top:191px;width:74px;text-align:right;font-size:12px;line-height:13px;letter-spacing:-.35px;font-weight:bold;color:#222">28,818</div>
<div class="t" style="left:1583px;top:191px;width:69px;text-align:right;font-size:12px;line-height:13px;letter-spacing:-.35px;font-weight:bold;color:#222">0</div>
<div class="t" style="left:1654px;top:191px;width:90px;text-align:right;font-size:12px;line-height:13px;letter-spacing:-.35px;font-weight:bold;color:#fff">28,818</div>
<div class="t" style="left:1746px;top:191px;width:88px;text-align:right;font-size:12px;line-height:13px;letter-spacing:-.35px;font-weight:bold;color:#222">0</div>
<div class="t" style="left:428px;top:190px;font-size:10.5px;line-height:13px;color:#333">TW</div>
<div class="t" style="left:503px;top:212px;font-size:10.5px;line-height:21px;letter-spacing:-.25px;color:#333">TW&gt;NMGC IC</div>
<div class="t" style="left:625px;top:212px;font-size:10.5px;line-height:21px;letter-spacing:-.2px;color:#333">NMGC IC</div>
<div class="t" style="left:693px;top:212px;width:74px;text-align:right;font-size:10.5px;line-height:21px;color:#333">0</div>
<div class="t" style="left:769px;top:212px;width:70px;text-align:right;font-size:10.5px;line-height:21px;color:#333">0</div>
<div class="t" style="left:841px;top:212px;width:75px;text-align:right;font-size:10.5px;line-height:21px;color:#333">-</div>
<div class="t" style="left:918px;top:212px;width:66px;text-align:right;font-size:10.5px;line-height:21px;color:#333">-</div>
<div class="t" style="left:986px;top:212px;width:66px;text-align:right;font-size:10.5px;line-height:21px;color:#333">-</div>
<div class="t" style="left:1054px;top:212px;width:65px;text-align:right;font-size:10.5px;line-height:21px;color:#333">-</div>
<div class="t" style="left:1121px;top:212px;width:79px;text-align:right;font-size:10.5px;line-height:21px;color:#fff">-</div>
<div class="t" style="left:1202px;top:212px;width:72px;text-align:right;font-size:10.5px;line-height:21px;color:#333">17,318</div>
<div class="t" style="left:1276px;top:212px;width:77px;text-align:right;font-size:10.5px;line-height:21px;color:#333">-</div>
<div class="t" style="left:1355px;top:212px;width:81px;text-align:right;font-size:10.5px;line-height:21px;color:#333">-</div>
<div class="t" style="left:1438px;top:212px;width:67px;text-align:right;font-size:10.5px;line-height:21px;color:#333">-</div>
<div class="t" style="left:1507px;top:212px;width:74px;text-align:right;font-size:10.5px;line-height:21px;color:#333">17,318</div>
<div class="t" style="left:1583px;top:212px;width:69px;text-align:right;font-size:10.5px;line-height:21px;color:#333">-</div>
<div class="t" style="left:1654px;top:212px;width:90px;text-align:right;font-size:10.5px;line-height:21px;color:#fff">17,318</div>
<div class="t" style="left:1746px;top:212px;width:88px;text-align:right;font-size:10.5px;line-height:21px;color:#333">0</div>
<div class="abs" style="left:403px;top:218px;width:9px;height:9px;border:1px solid #666;border-radius:2px"></div>
<div class="t" style="left:503px;top:237px;font-size:10.5px;line-height:21px;letter-spacing:-.25px;color:#333">TW&gt;NMG RIO PUERCO<br>IC</div>
<div class="t" style="left:625px;top:237px;font-size:10.5px;line-height:21px;letter-spacing:-.2px;color:#333">TW RIO<br>PUERCO</div>
<div class="t" style="left:693px;top:237px;width:74px;text-align:right;font-size:10.5px;line-height:21px;color:#333">0</div>
<div class="t" style="left:769px;top:237px;width:70px;text-align:right;font-size:10.5px;line-height:21px;color:#333">0</div>
<div class="t" style="left:841px;top:237px;width:75px;text-align:right;font-size:10.5px;line-height:21px;color:#333">-</div>
<div class="t" style="left:918px;top:237px;width:66px;text-align:right;font-size:10.5px;line-height:21px;color:#333">-</div>
<div class="t" style="left:986px;top:237px;width:66px;text-align:right;font-size:10.5px;line-height:21px;color:#333">-</div>
<div class="t" style="left:1054px;top:237px;width:65px;text-align:right;font-size:10.5px;line-height:21px;color:#333">-</div>
<div class="t" style="left:1121px;top:237px;width:79px;text-align:right;font-size:10.5px;line-height:21px;color:#fff">-</div>
<div class="t" style="left:1202px;top:237px;width:72px;text-align:right;font-size:10.5px;line-height:21px;color:#333">11,500</div>
<div class="t" style="left:1276px;top:237px;width:77px;text-align:right;font-size:10.5px;line-height:21px;color:#333">-</div>
<div class="t" style="left:1355px;top:237px;width:81px;text-align:right;font-size:10.5px;line-height:21px;color:#333">-</div>
<div class="t" style="left:1438px;top:237px;width:67px;text-align:right;font-size:10.5px;line-height:21px;color:#333">-</div>
<div class="t" style="left:1507px;top:237px;width:74px;text-align:right;font-size:10.5px;line-height:21px;color:#333">11,500</div>
<div class="t" style="left:1583px;top:237px;width:69px;text-align:right;font-size:10.5px;line-height:21px;color:#333">-</div>
<div class="t" style="left:1654px;top:237px;width:90px;text-align:right;font-size:10.5px;line-height:21px;color:#fff">11,500</div>
<div class="t" style="left:1746px;top:237px;width:88px;text-align:right;font-size:10.5px;line-height:21px;color:#333">0</div>
<div class="abs" style="left:403px;top:242px;width:9px;height:9px;border:1px solid #666;border-radius:2px"></div>
<div class="t" style="left:503px;top:283px;font-size:10.5px;line-height:21px;letter-spacing:-.25px;color:#333">SHERMAN</div>
<div class="t" style="left:625px;top:283px;font-size:10.5px;line-height:21px;letter-spacing:-.2px;color:#333">58646</div>
<div class="t" style="left:693px;top:283px;width:74px;text-align:right;font-size:10.5px;line-height:21px;color:#333">0</div>
<div class="t" style="left:769px;top:283px;width:70px;text-align:right;font-size:10.5px;line-height:21px;color:#333">0</div>
<div class="t" style="left:841px;top:283px;width:75px;text-align:right;font-size:10.5px;line-height:21px;color:#333">11,500</div>
<div class="t" style="left:918px;top:283px;width:66px;text-align:right;font-size:10.5px;line-height:21px;color:#333">-</div>
<div class="t" style="left:986px;top:283px;width:66px;text-align:right;font-size:10.5px;line-height:21px;color:#333">-</div>
<div class="t" style="left:1054px;top:283px;width:65px;text-align:right;font-size:10.5px;line-height:21px;color:#333">-</div>
<div class="t" style="left:1121px;top:283px;width:79px;text-align:right;font-size:10.5px;line-height:21px;color:#fff">11,500</div>
<div class="t" style="left:1202px;top:283px;width:72px;text-align:right;font-size:10.5px;line-height:21px;color:#333">-</div>
<div class="t" style="left:1276px;top:283px;width:77px;text-align:right;font-size:10.5px;line-height:21px;color:#333">11,500</div>
<div class="t" style="left:1355px;top:283px;width:81px;text-align:right;font-size:10.5px;line-height:21px;color:#333">-</div>
<div class="t" style="left:1438px;top:283px;width:67px;text-align:right;font-size:10.5px;line-height:21px;color:#333">-</div>
<div class="t" style="left:1507px;top:283px;width:74px;text-align:right;font-size:10.5px;line-height:21px;color:#333">-</div>
<div class="t" style="left:1583px;top:283px;width:69px;text-align:right;font-size:10.5px;line-height:21px;color:#333">-</div>
<div class="t" style="left:1654px;top:283px;width:90px;text-align:right;font-size:10.5px;line-height:21px;color:#fff">-</div>
<div class="t" style="left:1746px;top:283px;width:88px;text-align:right;font-size:10.5px;line-height:21px;color:#333">0</div>
<div class="abs" style="left:403px;top:288px;width:9px;height:9px;border:1px solid #666;border-radius:2px"></div>
<div class="t" style="left:503px;top:308px;font-size:10.5px;line-height:21px;letter-spacing:-.25px;color:#333">RED PLANT</div>
<div class="t" style="left:625px;top:308px;font-size:10.5px;line-height:21px;letter-spacing:-.2px;color:#333">RED</div>
<div class="t" style="left:693px;top:308px;width:74px;text-align:right;font-size:10.5px;line-height:21px;color:#333">0</div>
<div class="t" style="left:769px;top:308px;width:70px;text-align:right;font-size:10.5px;line-height:21px;color:#333">0</div>
<div class="t" style="left:841px;top:308px;width:75px;text-align:right;font-size:10.5px;line-height:21px;color:#333">2,500</div>
<div class="t" style="left:918px;top:308px;width:66px;text-align:right;font-size:10.5px;line-height:21px;color:#333">-</div>
<div class="t" style="left:986px;top:308px;width:66px;text-align:right;font-size:10.5px;line-height:21px;color:#333">-</div>
<div class="t" style="left:1054px;top:308px;width:65px;text-align:right;font-size:10.5px;line-height:21px;color:#333">-</div>
<div class="t" style="left:1121px;top:308px;width:79px;text-align:right;font-size:10.5px;line-height:21px;color:#fff">2,500</div>
<div class="t" style="left:1202px;top:308px;width:72px;text-align:right;font-size:10.5px;line-height:21px;color:#333">-</div>
<div class="t" style="left:1276px;top:308px;width:77px;text-align:right;font-size:10.5px;line-height:21px;color:#333">2,500</div>
<div class="t" style="left:1355px;top:308px;width:81px;text-align:right;font-size:10.5px;line-height:21px;color:#333">-</div>
<div class="t" style="left:1438px;top:308px;width:67px;text-align:right;font-size:10.5px;line-height:21px;color:#333">-</div>
<div class="t" style="left:1507px;top:308px;width:74px;text-align:right;font-size:10.5px;line-height:21px;color:#333">-</div>
<div class="t" style="left:1583px;top:308px;width:69px;text-align:right;font-size:10.5px;line-height:21px;color:#333">-</div>
<div class="t" style="left:1654px;top:308px;width:90px;text-align:right;font-size:10.5px;line-height:21px;color:#fff">-</div>
<div class="t" style="left:1746px;top:308px;width:88px;text-align:right;font-size:10.5px;line-height:21px;color:#333">0</div>
<div class="abs" style="left:403px;top:313px;width:9px;height:9px;border:1px solid #666;border-radius:2px"></div>
<div class="t" style="left:503px;top:332px;font-size:10.5px;line-height:21px;letter-spacing:-.25px;color:#333">HARBOR</div>
<div class="t" style="left:625px;top:332px;font-size:10.5px;line-height:21px;letter-spacing:-.2px;color:#333">78308</div>
<div class="t" style="left:693px;top:332px;width:74px;text-align:right;font-size:10.5px;line-height:21px;color:#333">0</div>
<div class="t" style="left:769px;top:332px;width:70px;text-align:right;font-size:10.5px;line-height:21px;color:#333">0</div>
<div class="t" style="left:841px;top:332px;width:75px;text-align:right;font-size:10.5px;line-height:21px;color:#333">2,900</div>
<div class="t" style="left:918px;top:332px;width:66px;text-align:right;font-size:10.5px;line-height:21px;color:#333">-</div>
<div class="t" style="left:986px;top:332px;width:66px;text-align:right;font-size:10.5px;line-height:21px;color:#333">-</div>
<div class="t" style="left:1054px;top:332px;width:65px;text-align:right;font-size:10.5px;line-height:21px;color:#333">-</div>
<div class="t" style="left:1121px;top:332px;width:79px;text-align:right;font-size:10.5px;line-height:21px;color:#fff">2,900</div>
<div class="t" style="left:1202px;top:332px;width:72px;text-align:right;font-size:10.5px;line-height:21px;color:#333">-</div>
<div class="t" style="left:1276px;top:332px;width:77px;text-align:right;font-size:10.5px;line-height:21px;color:#333">2,900</div>
<div class="t" style="left:1355px;top:332px;width:81px;text-align:right;font-size:10.5px;line-height:21px;color:#333">-</div>
<div class="t" style="left:1438px;top:332px;width:67px;text-align:right;font-size:10.5px;line-height:21px;color:#333">-</div>
<div class="t" style="left:1507px;top:332px;width:74px;text-align:right;font-size:10.5px;line-height:21px;color:#333">-</div>
<div class="t" style="left:1583px;top:332px;width:69px;text-align:right;font-size:10.5px;line-height:21px;color:#333">-</div>
<div class="t" style="left:1654px;top:332px;width:90px;text-align:right;font-size:10.5px;line-height:21px;color:#fff">-</div>
<div class="t" style="left:1746px;top:332px;width:88px;text-align:right;font-size:10.5px;line-height:21px;color:#333">0</div>
<div class="abs" style="left:403px;top:337px;width:9px;height:9px;border:1px solid #666;border-radius:2px"></div>
<div class="t" style="left:503px;top:357px;font-size:10.5px;line-height:21px;letter-spacing:-.25px;color:#333">AREA 1 POOL</div>
<div class="t" style="left:625px;top:357px;font-size:10.5px;line-height:21px;letter-spacing:-.2px;color:#333">58648</div>
<div class="t" style="left:693px;top:357px;width:74px;text-align:right;font-size:10.5px;line-height:21px;color:#333">0</div>
<div class="t" style="left:769px;top:357px;width:70px;text-align:right;font-size:10.5px;line-height:21px;color:#333">0</div>
<div class="t" style="left:841px;top:357px;width:75px;text-align:right;font-size:10.5px;line-height:21px;color:#333">12,000</div>
<div class="t" style="left:918px;top:357px;width:66px;text-align:right;font-size:10.5px;line-height:21px;color:#333">-</div>
<div class="t" style="left:986px;top:357px;width:66px;text-align:right;font-size:10.5px;line-height:21px;color:#333">-</div>
<div class="t" style="left:1054px;top:357px;width:65px;text-align:right;font-size:10.5px;line-height:21px;color:#333">-</div>
<div class="t" style="left:1121px;top:357px;width:79px;text-align:right;font-size:10.5px;line-height:21px;color:#fff">12,000</div>
<div class="t" style="left:1202px;top:357px;width:72px;text-align:right;font-size:10.5px;line-height:21px;color:#333">5,318</div>
<div class="t" style="left:1276px;top:357px;width:77px;text-align:right;font-size:10.5px;line-height:21px;color:#333">17,318</div>
<div class="t" style="left:1355px;top:357px;width:81px;text-align:right;font-size:10.5px;line-height:21px;color:#333">-</div>
<div class="t" style="left:1438px;top:357px;width:67px;text-align:right;font-size:10.5px;line-height:21px;color:#333">-</div>
<div class="t" style="left:1507px;top:357px;width:74px;text-align:right;font-size:10.5px;line-height:21px;color:#333">-</div>
<div class="t" style="left:1583px;top:357px;width:69px;text-align:right;font-size:10.5px;line-height:21px;color:#333">-</div>
<div class="t" style="left:1654px;top:357px;width:90px;text-align:right;font-size:10.5px;line-height:21px;color:#fff">-</div>
<div class="t" style="left:1746px;top:357px;width:88px;text-align:right;font-size:10.5px;line-height:21px;color:#333">0</div>
<div class="abs" style="left:403px;top:362px;width:9px;height:9px;border:1px solid #666;border-radius:2px"></div>
<div class="abs" style="left:403px;top:192px;width:9px;height:9px;border:1px solid #666;border-radius:2px"></div>
<svg class="abs" style="left:379px;top:194px" width="11" height="8" viewBox="0 0 11 8"><path d="M1.2 1.5l4.3 4.3 4.3-4.3" fill="none" stroke="#858585" stroke-width="1.9"/></svg>
<div class="abs" style="left:404px;top:146px;width:10px;height:10px;border:1px solid #4a3a5a;border-radius:2px"></div>
<div class="abs" style="left:426px;top:188px;width:1px;height:190px;background:#e0463a"></div>
<svg class="abs" style="left:484px;top:166px" width="10" height="12" viewBox="0 0 10 12"><path d="M2 0h6v1.2H7.2v3.4L9.5 7.6H5.6v4.2h-1.2V7.6H0.5l2.3-3V1.2H2z" fill="#222"/></svg>
<svg class="abs" style="left:606px;top:166px" width="10" height="12" viewBox="0 0 10 12"><path d="M2 0h6v1.2H7.2v3.4L9.5 7.6H5.6v4.2h-1.2V7.6H0.5l2.3-3V1.2H2z" fill="#222"/></svg>
<svg class="abs" style="left:679px;top:166px" width="10" height="12" viewBox="0 0 10 12"><path d="M2 0h6v1.2H7.2v3.4L9.5 7.6H5.6v4.2h-1.2V7.6H0.5l2.3-3V1.2H2z" fill="#222"/></svg>
<svg class="abs" style="left:698px;top:166px" width="10" height="12" viewBox="0 0 10 12"><path d="M2 0h6v1.2H7.2v3.4L9.5 7.6H5.6v4.2h-1.2V7.6H0.5l2.3-3V1.2H2z" fill="#222"/></svg>
<svg class="abs" style="left:773px;top:166px" width="10" height="12" viewBox="0 0 10 12"><path d="M2 0h6v1.2H7.2v3.4L9.5 7.6H5.6v4.2h-1.2V7.6H0.5l2.3-3V1.2H2z" fill="#222"/></svg>
<svg class="abs" style="left:555px;top:175px" width="9" height="5" viewBox="0 0 9 5"><path d="M0 0h9L4.5 5z" fill="#222"/></svg>
<div class="abs" style="left:371px;top:734px;width:1533px;height:9px;background:#dcdcdc"></div>
<div class="abs" style="left:371px;top:734px;width:1330px;height:9px;background:#666;border-radius:4.5px"></div>
<svg class="abs" style="left:1530px;top:183px" width="22" height="26" viewBox="0 0 22 26"><path d="M8.3 1.3c1 0 1.8.8 1.8 1.8v6.3c.2-.9 3.3-.9 3.4.4.4-.8 3.2-.7 3.4.6.5-.5 3-.3 3 1.2v6.2c0 4-2.7 6.9-6.4 6.9h-2.6c-1.9 0-3.3-.8-4.3-2.2L1.5 15.8c-.9-1.2.4-2.8 1.9-2L6.5 16V3.1c0-1 .8-1.8 1.8-1.8z" fill="#fff" stroke="#1a1a1a" stroke-width="1.1"/><path d="M10.1 9.5v4.5M13.5 10v4M16.9 11v3.5" stroke="#1a1a1a" stroke-width="1"/></svg>
<!-- /GRID -->
</body></html>
